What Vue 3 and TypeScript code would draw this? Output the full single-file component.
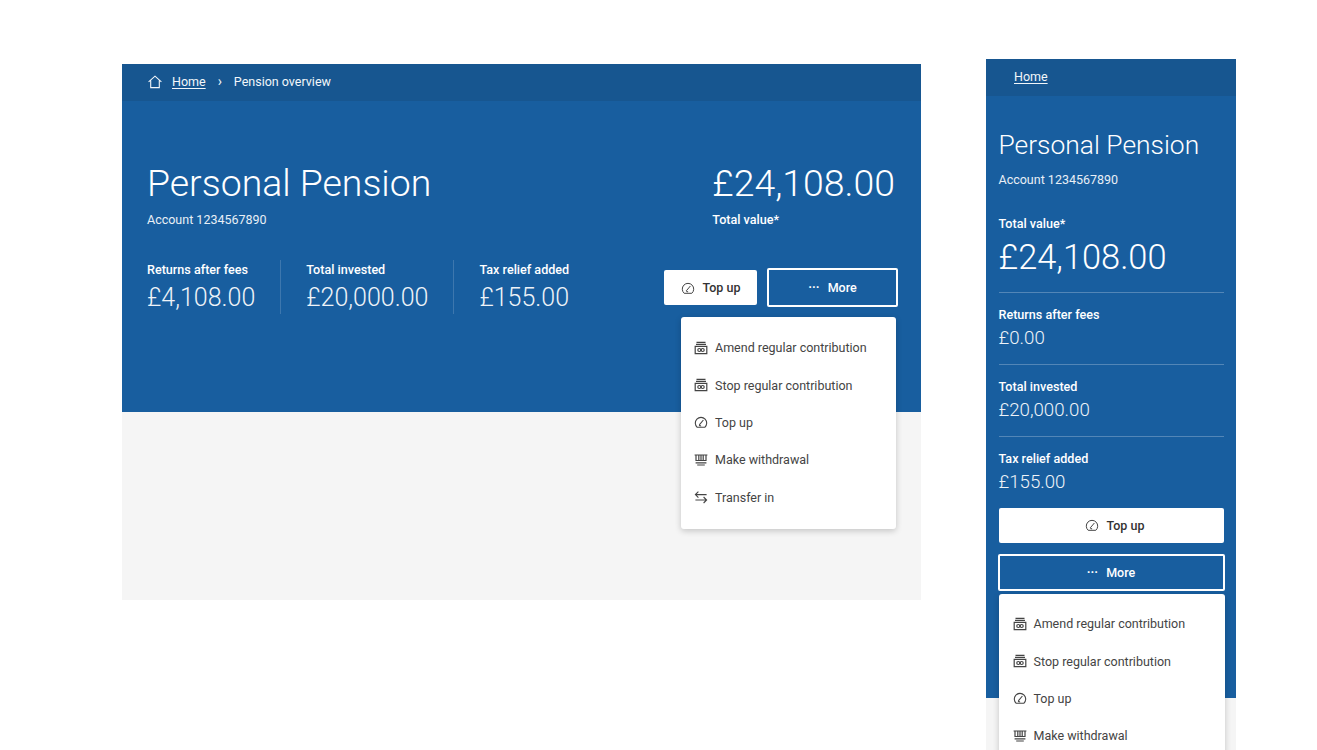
<script setup lang="ts">
type IconName = 'jar' | 'gauge' | 'withdraw' | 'transfer'
interface MenuItem { label: string; icon: IconName }
interface Stat { label: string; value: string }

const menu: MenuItem[] = [
  { label: 'Amend regular contribution', icon: 'jar' },
  { label: 'Stop regular contribution', icon: 'jar' },
  { label: 'Top up', icon: 'gauge' },
  { label: 'Make withdrawal', icon: 'withdraw' },
  { label: 'Transfer in', icon: 'transfer' },
]
const desktopStats: Stat[] = [
  { label: 'Returns after fees', value: '£4,108.00' },
  { label: 'Total invested', value: '£20,000.00' },
  { label: 'Tax relief added', value: '£155.00' },
]
const mobileStats: Stat[] = [
  { label: 'Returns after fees', value: '£0.00' },
  { label: 'Total invested', value: '£20,000.00' },
  { label: 'Tax relief added', value: '£155.00' },
]
</script>

<template>
  <div class="page">
    <section class="frame desktop">
      <nav class="crumbs">
        <svg class="home" viewBox="0 0 14 14" width="14" height="14" fill="none" stroke="currentColor" stroke-width="1.1">
          <path d="M.6 6.9 7 1.2l6.4 5.7M2.7 5.6v7h8.6v-7" />
        </svg>
        <a class="link">Home</a>
        <span class="chev">›</span>
        <span>Pension overview</span>
      </nav>
      <div class="hero">
        <div class="top">
          <div>
            <h1>Personal Pension</h1>
            <p class="account">Account 1234567890</p>
          </div>
          <div class="total">
            <div class="big">£24,108.00</div>
            <div class="label total-label">Total value*</div>
          </div>
        </div>
        <div class="bottom">
          <div class="stats">
            <div v-for="s in desktopStats" :key="s.label" class="stat">
              <div class="label">{{ s.label }}</div>
              <div class="value">{{ s.value }}</div>
            </div>
          </div>
          <div class="actions">
            <button class="btn solid top-up">
              <svg class="ico" viewBox="0 0 14 14" fill="none" stroke="currentColor" stroke-width="1"><path d="M3.2 12.3A5.7 5.7 0 1 1 10.8 12.3ZM5.3 9.8 9.4 5M5.3 9.8a1.3 1.3 0 0 0 1.8.9" /></svg>
              Top up
            </button>
            <button class="btn ghost more">
              <span class="dots">···</span>
              More
            </button>
            <ul class="menu menu-desktop">
              <li v-for="m in menu" :key="m.label">
                <svg v-if="m.icon === 'jar'" class="ico" viewBox="0 0 14 14" fill="none" stroke="currentColor" stroke-width="1.2"><path d="M2.5 1.3h9M2 3.4h10M1.2 5.4h11.6v7.2H1.2z" /><circle cx="5.3" cy="9" r="1.5" /><circle cx="8.7" cy="9" r="1.5" /></svg>
                <svg v-else-if="m.icon === 'gauge'" class="ico" viewBox="0 0 14 14" fill="none" stroke="currentColor" stroke-width="1.1"><path d="M3.2 12.3A5.7 5.7 0 1 1 10.8 12.3ZM5.3 9.8 9.4 5M5.3 9.8a1.3 1.3 0 0 0 1.8.9" /></svg>
                <svg v-else-if="m.icon === 'withdraw'" class="ico" viewBox="0 0 14 14" fill="none" stroke="currentColor" stroke-width="1.2"><path d="M.6 2h12.8M2 2v5.5h10V2M4.8 2v5.5M7 2v5.5M9.2 2v5.5M1.6 9.8h10.8M3.2 12h7.6" /></svg>
                <svg v-else class="ico" viewBox="0 0 14 14" fill="none" stroke="currentColor" stroke-width="1.1"><path d="M12.6 4.6H1.6M4.4 1.6l-3 3 3 3M1.4 10h11M9.6 7l3 3-3 3" /></svg>
                {{ m.label }}
              </li>
            </ul>
          </div>
        </div>
      </div>
      <div class="footer-grey"></div>
    </section>

    <section class="frame mobile">
      <nav class="crumbs m-crumbs"><a class="link">Home</a></nav>
      <div class="hero m-hero">
        <h1 class="m-title">Personal Pension</h1>
        <p class="account m-account">Account 1234567890</p>
        <div class="label m-total-label">Total value*</div>
        <div class="big m-big">£24,108.00</div>
        <div v-for="s in mobileStats" :key="s.label" class="m-stat">
          <div class="label">{{ s.label }}</div>
          <div class="value m-value">{{ s.value }}</div>
        </div>
        <div class="m-actions">
          <button class="btn solid m-btn m-top">
            <svg class="ico" viewBox="0 0 14 14" fill="none" stroke="currentColor" stroke-width="1"><path d="M3.2 12.3A5.7 5.7 0 1 1 10.8 12.3ZM5.3 9.8 9.4 5M5.3 9.8a1.3 1.3 0 0 0 1.8.9" /></svg>
            Top up
          </button>
          <button class="btn ghost m-btn m-more">
            <span class="dots">···</span>
            More
          </button>
          <ul class="menu menu-mobile">
            <li v-for="m in menu" :key="m.label">
              <svg v-if="m.icon === 'jar'" class="ico" viewBox="0 0 14 14" fill="none" stroke="currentColor" stroke-width="1.2"><path d="M2.5 1.3h9M2 3.4h10M1.2 5.4h11.6v7.2H1.2z" /><circle cx="5.3" cy="9" r="1.5" /><circle cx="8.7" cy="9" r="1.5" /></svg>
              <svg v-else-if="m.icon === 'gauge'" class="ico" viewBox="0 0 14 14" fill="none" stroke="currentColor" stroke-width="1.1"><path d="M3.2 12.3A5.7 5.7 0 1 1 10.8 12.3ZM5.3 9.8 9.4 5M5.3 9.8a1.3 1.3 0 0 0 1.8.9" /></svg>
              <svg v-else-if="m.icon === 'withdraw'" class="ico" viewBox="0 0 14 14" fill="none" stroke="currentColor" stroke-width="1.2"><path d="M.6 2h12.8M2 2v5.5h10V2M4.8 2v5.5M7 2v5.5M9.2 2v5.5M1.6 9.8h10.8M3.2 12h7.6" /></svg>
              <svg v-else class="ico" viewBox="0 0 14 14" fill="none" stroke="currentColor" stroke-width="1.1"><path d="M12.6 4.6H1.6M4.4 1.6l-3 3 3 3M1.4 10h11M9.6 7l3 3-3 3" /></svg>
              {{ m.label }}
            </li>
          </ul>
        </div>
      </div>
      <div class="m-grey"></div>
    </section>
  </div>
</template>

<style>
html, body { margin: 0; background: #fff; overflow: hidden; }
</style>

<style scoped>
.page {
  position: relative;
  height: 750px;
  width: 1317px;
  overflow: hidden;
  display: flex;
  align-items: flex-start;
  font-family: Roboto, "Liberation Sans", sans-serif;
  color: #fff;
  background: #fff;
}
.frame { flex: none; }
.desktop { width: 799px; margin: 64px 0 0 122px; }
.mobile { width: 250px; margin: 59px 0 0 65px; }
.crumbs {
  height: 35px;
  padding-bottom: 2px;
  background: #175690;
  display: flex;
  align-items: center;
  padding-left: 26px;
  font-size: 12.5px;
  color: #f2f6fa;
}
.home { margin-right: 10px; }
.link { text-decoration: underline; text-underline-offset: 2px; }
.chev { margin: 0 12px; font-size: 14px; line-height: 1; position: relative; top: -1px; }
.hero { background: #185e9f; height: 311px; padding: 0 26px 0 25px; box-sizing: border-box; }
.top { display: flex; justify-content: space-between; padding-top: 59px; }
h1 {
  margin: 0;
  font-weight: 300;
  font-size: 37.4px;
  line-height: 46px;
}
.account { margin: 6px 0 0; font-size: 12.5px; line-height: 15px; font-weight: 400; color: #e8eff6; }
.total { display: flex; flex-direction: column; }
.big { font-weight: 300; font-size: 37.4px; line-height: 46px; }
.label { font-size: 12.6px; line-height: 15px; font-weight: 500; }
.total-label { margin-top: 6px; }
.bottom { display: flex; justify-content: space-between; margin-top: 33px; }
.stats { display: flex; }
.stat {
  height: 54px;
  padding: 2px 25px 0;
  box-sizing: border-box;
  border-left: 1px solid rgba(255, 255, 255, 0.16);
}
.stat:first-child { padding-left: 0; border-left: 0; }
.value { font-size: 25px; font-weight: 300; line-height: 30px; margin-top: 6px; color: #eef3f8; }
.actions { position: relative; display: flex; align-items: flex-start; gap: 10px; padding-top: 8px; margin-right: -1px; }
.btn {
  font-family: inherit;
  font-size: 12.5px;
  font-weight: 500;
  border-radius: 2px;
  display: flex;
  align-items: center;
  justify-content: center;
  box-sizing: border-box;
  cursor: pointer;
}
.solid { background: #fff; color: #333; border: 0; }
.ghost { background: transparent; color: #fff; border: 2px solid #fff; }
.top-up { width: 93px; height: 35px; margin-top: 2px; }
.more { width: 131px; height: 39px; margin-right: -2px; }
.ico { width: 14px; height: 14px; margin-right: 8px; flex: none; color: #444; }
.dots { margin-right: 8px; font-weight: 700; letter-spacing: 0; }
.menu {
  position: absolute;
  margin: 0;
  padding: 12px 0;
  list-style: none;
  background: #fff;
  border-radius: 3px;
  box-shadow: 0 2px 6px rgba(0, 0, 0, 0.2);
  color: #444;
  font-size: 12.5px;
  font-weight: 400;
  box-sizing: border-box;
}
.menu li { height: 37.4px; display: flex; align-items: center; padding-left: 13px; }
.menu .ico { margin-right: 7px; }
.menu-desktop { top: 57px; right: 0; width: 215px; height: 212px; padding-top: 12px; }
.footer-grey { height: 188px; background: #f5f5f5; }

.m-crumbs { padding-left: 28px; }
.m-hero { height: 602px; padding: 0 12px 0 12.5px; }
.m-title { font-size: 26.4px; line-height: 34px; padding-top: 31.5px; }
.m-account { margin-top: 10px; }
.m-total-label { margin-top: 29.5px; }
.m-big { font-size: 34.4px; line-height: 44px; margin-top: 3.5px; padding-bottom: 13.5px; }
.m-stat { border-top: 1px solid rgba(255, 255, 255, 0.25); height: 72px; padding-top: 13.5px; box-sizing: border-box; }
.m-value { font-size: 18.7px; line-height: 24px; margin-top: 4.5px; }
.m-actions { position: relative; display: flex; flex-direction: column; margin-top: -0.5px; }
.m-btn { width: 225px; height: 35px; }
.m-top { padding-left: 13px; }
.m-more { width: 227px; height: 37px; margin: 11px 0 0 -1px; }
.menu-mobile { top: 86px; left: 0; width: 226px; height: 230px; padding-top: 11.5px; z-index: 1; }
.menu-mobile li { padding-left: 14px; }
.m-grey { height: 60px; background: #f5f5f5; }
</style>
